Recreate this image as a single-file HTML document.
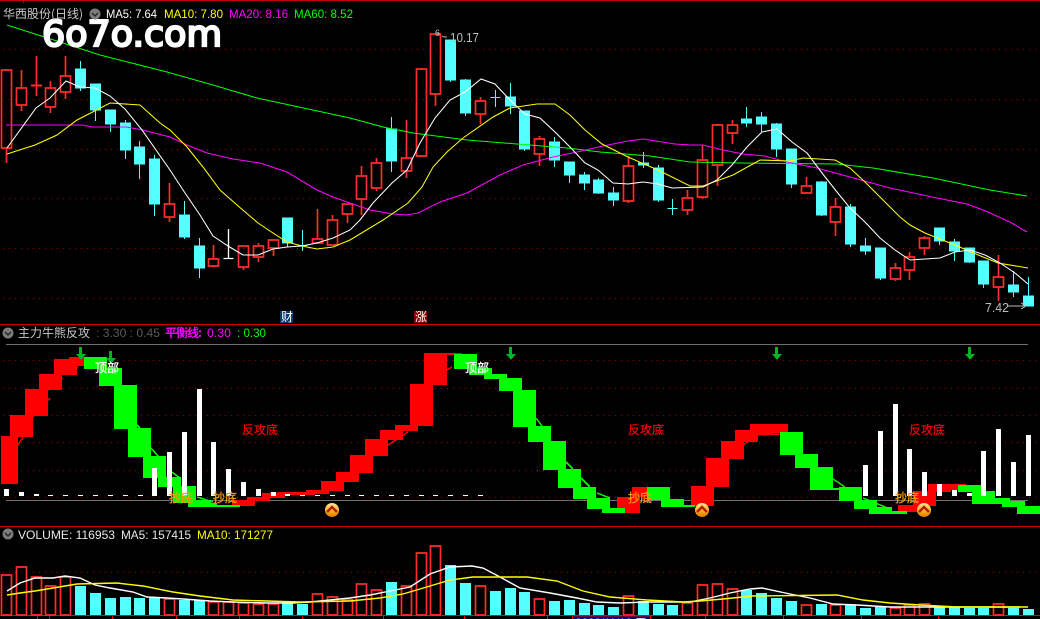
<!DOCTYPE html>
<html lang="zh">
<head>
<meta charset="utf-8">
<title>华西股份(日线)</title>
<style>
html,body{margin:0;padding:0;background:#000;width:1040px;height:619px;overflow:hidden}
svg{display:block}
text{font-family:"Liberation Sans","WenQuanYi Zen Hei","Noto Sans CJK SC",sans-serif;font-size:12px}
.cj{font-family:"WenQuanYi Zen Hei","Noto Sans CJK SC",sans-serif}
.g{shape-rendering:crispEdges}
.grid{stroke:#a80000;stroke-width:1;stroke-dasharray:1 5;fill:none}
polyline{fill:none}
</style>
</head>
<body>
<svg width="1040" height="619" viewBox="0 0 1040 619" xmlns="http://www.w3.org/2000/svg">
<defs>
<linearGradient id="gold" x1="0" y1="0" x2="0" y2="1"><stop offset="0" stop-color="#ffe9a0"/><stop offset=".55" stop-color="#ffb020"/><stop offset="1" stop-color="#d87800"/></linearGradient>
</defs>
<rect width="1040" height="619" fill="#000"/>

<g class="g">
<!-- frame lines -->
<path d="M0 .5H1040M23.5 0V3M0 324.5H1040M0 526.5H1040" stroke="#c80000" fill="none"/>
<path d="M0 615.5H1040" stroke="#f00000" fill="none"/>
<path d="M37.5 616v3M49.5 616v3M112.5 616v3M176.5 616v3M239.5 616v3M302.5 616v3M383.5 616v3M464.5 616v3M547.5 616v3M705.5 616v3M783.5 616v3M861.5 616v3M938.5 616v3" stroke="#f00000" fill="none"/>

<!-- grid dotted -->
<path class="grid" d="M3 49.5H1040M3 99.5H1040M3 149.5H1040M3 198.5H1040M3 248.5H1040M3 298.5H1040"/>
<path class="grid" d="M3 360.5H1040M3 388.5H1040M3 415.5H1040M3 442.5H1040M3 470.5H1040M3 497.5H1040"/>
<path class="grid" d="M3 572.5H1040"/>
<path d="M6 344.5H1028M6 500.5H1028" stroke="#707070" fill="none"/>

<!-- red candles -->
<path shape-rendering="auto" stroke-width="1.7" fill="none" stroke="#ff2c2c" d="M6.5 148V163M1.5 70h10V148h-10z
M21.5 70V88M21.5 105V111M16.5 88h10V105h-10z
M36.5 56V96
M50.5 81V88M50.5 107V113M45.5 88h10V107h-10z
M65.5 56V76M65.5 92V99M60.5 76h10V92h-10z
M169.5 183V204M169.5 217V222M164.5 204h10V217h-10z
M213.5 245V259M213.5 266V267M208.5 259h10V266h-10z
M243.5 267V270M238.5 246h10V267h-10z
M258.5 243V246M258.5 257V262M253.5 246h10V257h-10z
M273.5 239V240M273.5 248V256M268.5 240h10V248h-10z
M317.5 209V239M312.5 239h10V243h-10z
M332.5 215V220M327.5 220h10V245h-10z
M347.5 214V223M342.5 204h10V214h-10z
M361.5 166V176M361.5 199V215M356.5 176h10V199h-10z
M376.5 158V163M376.5 188V191M371.5 163h10V188h-10z
M406.5 120V158M406.5 171V178M401.5 158h10V171h-10z
M421.5 156V157M416.5 69h10V156h-10z
M435.5 94V106M430.5 34h10V94h-10z
M480.5 97V101M480.5 114V124M475.5 101h10V114h-10z
M539.5 136V139M539.5 154V166M534.5 139h10V154h-10z
M628.5 156V166M628.5 201V203M623.5 166h10V201h-10z
M687.5 190V198M687.5 210V215M682.5 198h10V210h-10z
M702.5 145V160M702.5 197V199M697.5 160h10V197h-10z
M717.5 124V125M717.5 165V186M712.5 125h10V165h-10z
M732.5 120V125M732.5 133V144M727.5 125h10V133h-10z
M806.5 177V186M806.5 193V194M801.5 186h10V193h-10z
M835.5 198V207M835.5 222V236M830.5 207h10V222h-10z
M895.5 263V268M895.5 279V281M890.5 268h10V279h-10z
M909.5 252V257M909.5 270V280M904.5 257h10V270h-10z
M924.5 236V238M924.5 248V255M919.5 238h10V248h-10z
M998.5 255V277M998.5 287V301M993.5 277h10V287h-10z"/>
<path shape-rendering="auto" stroke-width="2" fill="none" stroke="#ff2c2c" d="M31 85.5h11"/>
<!-- white doji -->
<path shape-rendering="auto" stroke-width="1.35" fill="none" stroke="#fff" d="M228.5 229V259M223.5 258.5h10"/>
<!-- cyan candles -->
<path fill="#54ffff" stroke="#54ffff" d="M80.5 61V69M80.5 88V91M75.5 69h10V88h-10z
M95.5 110V121M90.5 84h10V110h-10z
M110.5 124V132M105.5 110h10V124h-10z
M125.5 120V123M125.5 150V159M120.5 123h10V150h-10z
M139.5 141V147M139.5 164V179M134.5 147h10V164h-10z
M154.5 155V159M154.5 204V216M149.5 159h10V204h-10z
M184.5 201V215M184.5 237V239M179.5 215h10V237h-10z
M199.5 238V246M199.5 268V278M194.5 246h10V268h-10z
M287.5 243V247M282.5 218h10V243h-10z
M302.5 230V251M297.5 245.5h10
M391.5 117V129M391.5 161V172M386.5 129h10V161h-10z
M450.5 80V82M445.5 40h10V80h-10z
M465.5 79V80M465.5 113V116M460.5 80h10V113h-10z
M495.5 90V107M490.5 97.5h10
M510.5 83V97M510.5 106V114M505.5 97h10V106h-10z
M524.5 149V151M519.5 111h10V149h-10z
M554.5 137V142M554.5 160V167M549.5 142h10V160h-10z
M569.5 175V183M564.5 162h10V175h-10z
M584.5 172V175M584.5 183V190M579.5 175h10V183h-10z
M598.5 178V180M598.5 193V194M593.5 180h10V193h-10z
M613.5 187V193M613.5 200V206M608.5 193h10V200h-10z
M643.5 152V163M643.5 165V168M638.5 163h10v2h-10z
M658.5 165V168M658.5 200V202M653.5 168h10V200h-10z
M672.5 199V215M667.5 208.5h10
M746.5 107V119M746.5 123V127M741.5 119h10V123h-10z
M761.5 112V117M761.5 124V132M756.5 117h10V124h-10z
M776.5 123V124M776.5 149V157M771.5 124h10V149h-10z
M791.5 184V188M786.5 149h10V184h-10z
M821.5 181V182M821.5 215V216M816.5 182h10V215h-10z
M850.5 204V207M850.5 244V247M845.5 207h10V244h-10z
M865.5 238V246M865.5 251V255M860.5 246h10V251h-10z
M880.5 278V280M875.5 248h10V278h-10z
M939.5 241V245M934.5 228h10V241h-10z
M954.5 239V242M954.5 251V261M949.5 242h10V251h-10z
M969.5 262V263M964.5 248h10V262h-10z
M983.5 284V288M978.5 261h10V284h-10z
M1013.5 271V285M1013.5 292V297M1008.5 285h10V292h-10z
M1028.5 277V296M1023.5 296h10V306h-10z"/>

<!-- MA lines top -->
<g shape-rendering="auto" stroke-width="1.05">
<polyline stroke="#00ff00" points="7,25 63,43 100,55 167,72 213,85 257,98 350,118 383,127 413,133 467,140 517,144 567,148 600,152 650,156 690,162 740,163 837,164 873,168 933,178 990,190 1027,196"/>
<polyline stroke="#ff00ff" points="6,125 83,125 92,127 126,127 143,130 170,137 187,145 207,153 233,159 260,163 287,172 317,190 333,197 350,203 370,210 393,214 407,215 418,213 440,202 467,193 500,175 523,165 553,157 577,152 603,146 628,141 643,139 675,144 690,145 703,145 723,150 743,154 765,156 787,162 817,168 850,177 890,188 937,198 967,204 983,210 1010,222 1027,232"/>
<polyline stroke="#ffff00" points="7,154 35,145 57,135 77,120 110,103 140,105 160,123 170,130 187,147 203,167 220,190 237,205 258,223 273,233 287,242 302,246 317,249 333,247 350,240 383,220 408,203 422,187 433,167 447,152 463,138 493,117 510,108 537,104 555,104 570,115 585,130 602,144 628,157 658,170 690,186 703,186 733,175 760,160 790,161 803,158 835,160 850,168 865,182 880,197 900,217 910,225 925,233 955,245 983,257 998,263 1028,268"/>
<polyline stroke="#ffffff" points="7,148 36,108 50,98 66,81 80,87 95,88 110,96 125,109 142,130 170,170 185,193 200,215 213,236 228,246 243,255 258,255 273,249 287,247 302,246 317,243 333,238 350,230 360,220 373,203 392,183 407,170 420,143 435,118 450,100 465,92 481,79 495,84 510,100 525,114 540,118 555,132 570,147 585,163 598,170 613,183 628,184 643,182 658,184 672,188 703,187 717,180 732,165 747,147 762,132 777,129 792,142 807,153 822,173 837,192 850,208 865,222 880,238 895,250 910,260 925,259 940,258 955,252 970,250 985,255 1000,263 1015,273 1028,284"/>
</g>

<!-- price markers -->
<path d="M437 34h2M442 36l2 1h3M1007 306h17M1021 303l5 3-5 3" stroke="#bdbdbd" fill="none"/>

<!-- badges -->
<rect x="280" y="311" width="13" height="12" fill="#0a3868"/>
<rect x="414" y="311" width="13" height="12" fill="#8a0000"/>

<!-- middle pane: bands -->
<path fill="#ff0000" d="M1 436h17v48h-17zM10 415h23v22h-23zM25 389h23v27h-23zM39 374h23v16h-23zM54 359h23v16h-23zM69 357h15v9h-15z
M232 500h23v6h-23zM247 497h23v4h-23zM262 493h23v5h-23zM277 492h23v3h-23zM291 492h24v3h-24zM306 490h23v4h-23zM321 481h23v10h-23zM336 472h23v10h-23zM350 455h23v18h-23zM365 439h23v17h-23zM380 430h23v10h-23zM395 425h23v6h-23zM410 384h23v42h-23zM424 353h23v32h-23zM439 353h23v2h-23z
M617 497h23v16h-23zM632 487h15v10h-15z
M691 486h23v20h-23zM706 458h23v29h-23zM721 441h23v18h-23zM735 430h23v12h-23zM750 424h23v11h-23zM765 424h23v9h-23z
M898 505h23v7h-23zM913 491h23v15h-23zM928 484h23v8h-23zM943 484h23v6h-23z"/>
<path fill="#00ff00" d="M84 357h23v12h-23zM99 368h23v18h-23zM114 385h23v44h-23zM128 428h23v29h-23zM143 456h23v22h-23zM158 477h23v10h-23zM173 486h23v17h-23zM188 500h23v7h-23zM211 503h6v4h-6zM217 505h23v2h-23z
M454 354h23v15h-23zM469 368h23v7h-23zM484 374h23v5h-23zM499 378h23v13h-23zM513 390h23v37h-23zM528 426h23v16h-23zM543 441h23v29h-23zM558 469h23v19h-23zM573 487h23v12h-23zM587 498h23v11h-23zM602 508h23v5h-23z
M647 487h23v13h-23zM661 499h23v8h-23zM684 505h11v2h-11z
M780 432h23v23h-23zM795 454h23v14h-23zM810 467h23v23h-23zM825 488h14v2h-14zM839 487h23v14h-23zM854 500h23v9h-23zM869 507h23v7h-23zM892 511h15v3h-15z
M958 485h23v7h-23zM972 491h23v13h-23zM987 498h23v6h-23zM1002 501h23v6h-23zM1017 506h23v8h-23z"/>
<g stroke-width="1.5" fill="none" stroke="#ff0000">
<path d="M18 445L23 437M33 417L50 398M48 390L63 378M63 375L78 367M388 445L408 432M447 370L452 367M743 445L733 459M743 445L758 435L780 434"/>
</g>
<g stroke-width="1.5" fill="none" stroke="#00ff00">
<path d="M137 425L140 428M151 448L158 456M172 472L180 478M197 497L213 502M536 418L542 426M566 462L573 469M581 478L590 487M597 493L610 498M833 479L845 487M863 498L890 509"/>
</g>

<!-- white bars -->
<path fill="#fff" d="M4 489h5v7H4zM19 492h5v4h-5zM34 494h5v2h-5zM48 495h5v1h-5zM63 495h5v1h-5zM78 495h5v1h-5zM93 495h5v1h-5zM108 495h5v1h-5zM123 495h5v1h-5zM138 495h5v1h-5z
M152 468h5v28h-5zM167 452h5v44h-5zM182 432h5v64h-5zM197 389h5v107h-5zM211 442h5v54h-5zM226 469h5v27h-5zM241 482h5v14h-5zM256 489h5v7h-5zM271 492h5v4h-5zM285 494h5v2h-5z
M300 495h5v1h-5zM315 495h5v1h-5zM330 495h5v1h-5zM345 495h5v1h-5zM359 495h5v1h-5zM374 495h5v1h-5zM389 495h5v1h-5zM404 495h5v1h-5zM419 495h5v1h-5zM433 495h5v1h-5zM448 495h5v1h-5zM463 495h5v1h-5zM478 495h5v1h-5z
M863 465h5v31h-5zM878 431h5v65h-5zM893 404h5v92h-5zM907 449h5v47h-5zM922 472h5v24h-5zM937 484h5v12h-5zM952 490h5v6h-5zM967 493h5v3h-5zM981 451h5v45h-5zM996 429h5v67h-5zM1011 462h5v34h-5zM1026 435h5v61h-5z"/>

<!-- arrows -->
<path fill="#00b428" d="M79 347h3v7h4l-5 6-5-6h3zM109 351h3v7h4l-5 6-5-6h3zM509 347h3v7h4l-5 6-5-6h3zM775 347h3v7h4l-5 6-5-6h3zM968 347h3v7h4l-5 6-5-6h3z"/>
</g>

<!-- gold icons -->
<g>
<g transform="translate(332,510)"><circle r="7" fill="url(#gold)"/><path d="M-5 2L0-3L5 2" stroke="#b41e00" stroke-width="2.4" fill="none"/></g>
<g transform="translate(702,510)"><circle r="7" fill="url(#gold)"/><path d="M-5 2L0-3L5 2" stroke="#b41e00" stroke-width="2.4" fill="none"/></g>
<g transform="translate(924,510)"><circle r="7" fill="url(#gold)"/><path d="M-5 2L0-3L5 2" stroke="#b41e00" stroke-width="2.4" fill="none"/></g>
</g>

<!-- volume pane -->
<g class="g">
<path shape-rendering="auto" stroke-width="1.7" fill="none" stroke="#ff2c2c" d="M1.5 575h10v40h-10zM16.5 567h10v48h-10zM31.5 577h10v38h-10zM45.5 586h10v29h-10zM60.5 577h10v38h-10z
M164.5 599h10v16h-10zM208.5 602h10v13h-10zM223.5 602h10v13h-10zM238.5 603h10v12h-10zM253.5 604h10v11h-10zM268.5 604h10v11h-10z
M312.5 594h10v21h-10zM327.5 597h10v18h-10zM342.5 600h10v15h-10zM356.5 584h10v31h-10zM371.5 590h10v25h-10zM401.5 586h10v29h-10zM416.5 553h10v62h-10zM430.5 546h10v69h-10zM475.5 586h10v29h-10zM534.5 599h10v16h-10zM623.5 596h10v19h-10zM682.5 603h10v12h-10zM697.5 585h10v30h-10zM712.5 584h10v31h-10zM727.5 589h10v26h-10zM801.5 605h10v10h-10zM830.5 605h10v10h-10zM890.5 608h10v7h-10zM904.5 605h10v10h-10zM919.5 604h10v11h-10zM993.5 604h10v11h-10z"/>
<path fill="#54ffff" d="M75 586h11v29H75zM90 593h11v22H90zM105 598h11v17h-11zM120 597h11v18h-11zM134 598h11v17h-11zM149 598h11v17h-11zM179 600h11v15h-11zM194 600h11v15h-11zM282 602h11v13h-11zM297 604h11v11h-11z
M386 582h11v33h-11zM445 565h11v50h-11zM460 583h11v32h-11zM490 591h11v24h-11zM505 588h11v27h-11zM519 592h11v23h-11zM549 601h11v14h-11zM564 600h11v15h-11zM579 603h11v12h-11zM593 605h11v10h-11zM608 607h11v8h-11zM638 601h11v14h-11zM653 604h11v11h-11zM667 605h11v10h-11z
M741 590h11v25h-11zM756 593h11v22h-11zM771 598h11v17h-11zM786 601h11v14h-11zM816 604h11v11h-11zM845 605h11v10h-11zM860 608h11v7h-11zM875 606h11v9h-11zM934 606h11v9h-11zM949 607h11v8h-11zM964 608h11v7h-11zM978 608h11v7h-11zM1008 608h11v7h-11zM1023 609h11v6h-11z"/>
<polyline shape-rendering="auto" stroke="#ffffff" stroke-width="1.4" points="7,591 20,583 35,578 53,578 65,576 80,578 95,585 110,588 133,592 147,597 167,598 183,599 210,601 233,602 267,603 293,603 310,602 340,599 350,598 370,595 390,591 410,587 430,574 450,567 472,566 483,568 500,577 520,588 550,593 577,598 597,602 620,603 647,602 690,602 710,598 730,593 750,589 762,588 790,594 810,598 833,604 857,605 890,607 957,607 1020,607"/>
<polyline shape-rendering="auto" stroke="#ffff00" stroke-width="1.4" points="7,595 20,593 35,591 53,588 77,584 117,583 143,586 173,592 200,596 233,600 267,601 300,602 350,601 380,598 403,594 430,586 450,580 473,577 527,577 557,581 583,591 610,597 647,600 683,602 700,601 723,599 753,596 837,595 863,600 890,603 920,605 957,607 1028,607"/>
<!-- date box -->
<rect x="572.5" y="616" width="78" height="4" fill="#000080" stroke="#e60000"/>
</g>

<!-- logo -->
<text x="42" y="46" fill="#fff" stroke="#fff" stroke-width="2.2" textLength="180" lengthAdjust="spacingAndGlyphs" style="font-family:'DejaVu Sans',sans-serif;font-size:36px">6o7o.com</text>

<!-- top header -->
<text x="3" y="18" fill="#c8c8c8" class="cj" style="font-size:12px" textLength="80">华西股份(日线)</text>
<circle cx="95" cy="14" r="5.5" fill="#7c7c7c"/><path d="M92 13l3 3 3-3" stroke="#222" stroke-width="1.3" fill="none"/>
<text x="106" y="18" fill="#fff" textLength="51" lengthAdjust="spacingAndGlyphs">MA5: 7.64</text>
<text x="164" y="18" fill="#ffff00" textLength="59" lengthAdjust="spacingAndGlyphs">MA10: 7.80</text>
<text x="229" y="18" fill="#ff00ff" textLength="59" lengthAdjust="spacingAndGlyphs">MA20: 8.16</text>
<text x="294" y="18" fill="#00ff00" textLength="59" lengthAdjust="spacingAndGlyphs">MA60: 8.52</text>

<text x="435" y="36" fill="#bdbdbd" style="font-size:9px">6</text>
<text x="450" y="42" fill="#bdbdbd" textLength="29" lengthAdjust="spacingAndGlyphs" style="font-size:13px">10.17</text>
<text x="985" y="312" fill="#bdbdbd" textLength="24" lengthAdjust="spacingAndGlyphs" style="font-size:13px">7.42</text>

<text x="281" y="321" fill="#fff" class="cj" style="font-size:12px">财</text>
<text x="415" y="321" fill="#fff" class="cj" style="font-size:12px">涨</text>

<!-- middle header -->
<circle cx="8" cy="333" r="5.5" fill="#7c7c7c"/><path d="M5 332l3 3 3-3" stroke="#222" stroke-width="1.3" fill="none"/>
<text x="18" y="337" fill="#c8c8c8" class="cj" textLength="72" style="font-size:12px">主力牛熊反攻</text>
<text x="96" y="337" fill="#5a5a5a" textLength="64" lengthAdjust="spacingAndGlyphs">: 3.30 : 0.45</text>
<text x="165" y="337" fill="#ff00ff" class="cj" style="font-size:12px;font-weight:bold" textLength="37">平衡线:</text>
<text x="207" y="337" fill="#ff00ff" textLength="24" lengthAdjust="spacingAndGlyphs">0.30</text>
<text x="237" y="337" fill="#00ff00" textLength="29" lengthAdjust="spacingAndGlyphs">: 0.30</text>

<!-- band labels -->
<g class="cj" style="font-size:12px">
<text x="95" y="372" fill="#fff" stroke="#fff" stroke-width=".35" textLength="24">顶部</text>
<text x="465" y="372" fill="#fff" stroke="#fff" stroke-width=".35" textLength="24">顶部</text>
<text x="242" y="434" fill="#ff0000" stroke="#ff0000" stroke-width=".2" textLength="36">反攻底</text>
<text x="628" y="434" fill="#ff0000" stroke="#ff0000" stroke-width=".2" textLength="36">反攻底</text>
<text x="909" y="434" fill="#ff0000" stroke="#ff0000" stroke-width=".2" textLength="36">反攻底</text>
<text x="169" y="502" fill="#ff9900" stroke="#ff9900" stroke-width=".35" textLength="24">抄底</text>
<text x="213" y="502" fill="#ff9900" stroke="#ff9900" stroke-width=".35" textLength="24">抄底</text>
<text x="628" y="502" fill="#ff9900" stroke="#ff9900" stroke-width=".35" textLength="24">抄底</text>
<text x="895" y="502" fill="#ff9900" stroke="#ff9900" stroke-width=".35" textLength="24">抄底</text>
</g>

<!-- volume header -->
<circle cx="8" cy="534" r="5.5" fill="#7c7c7c"/><path d="M5 533l3 3 3-3" stroke="#222" stroke-width="1.3" fill="none"/>
<text x="18" y="539" fill="#e8e8e8" textLength="97" lengthAdjust="spacingAndGlyphs">VOLUME: 116953</text>
<text x="121" y="539" fill="#e8e8e8" textLength="70" lengthAdjust="spacingAndGlyphs">MA5: 157415</text>
<text x="197" y="539" fill="#ffff00" textLength="76" lengthAdjust="spacingAndGlyphs">MA10: 171277</text>

<text x="575" y="627" fill="#d8d8ff" textLength="72" lengthAdjust="spacing">2023/11/10,五</text>
</svg>
</body>
</html>
